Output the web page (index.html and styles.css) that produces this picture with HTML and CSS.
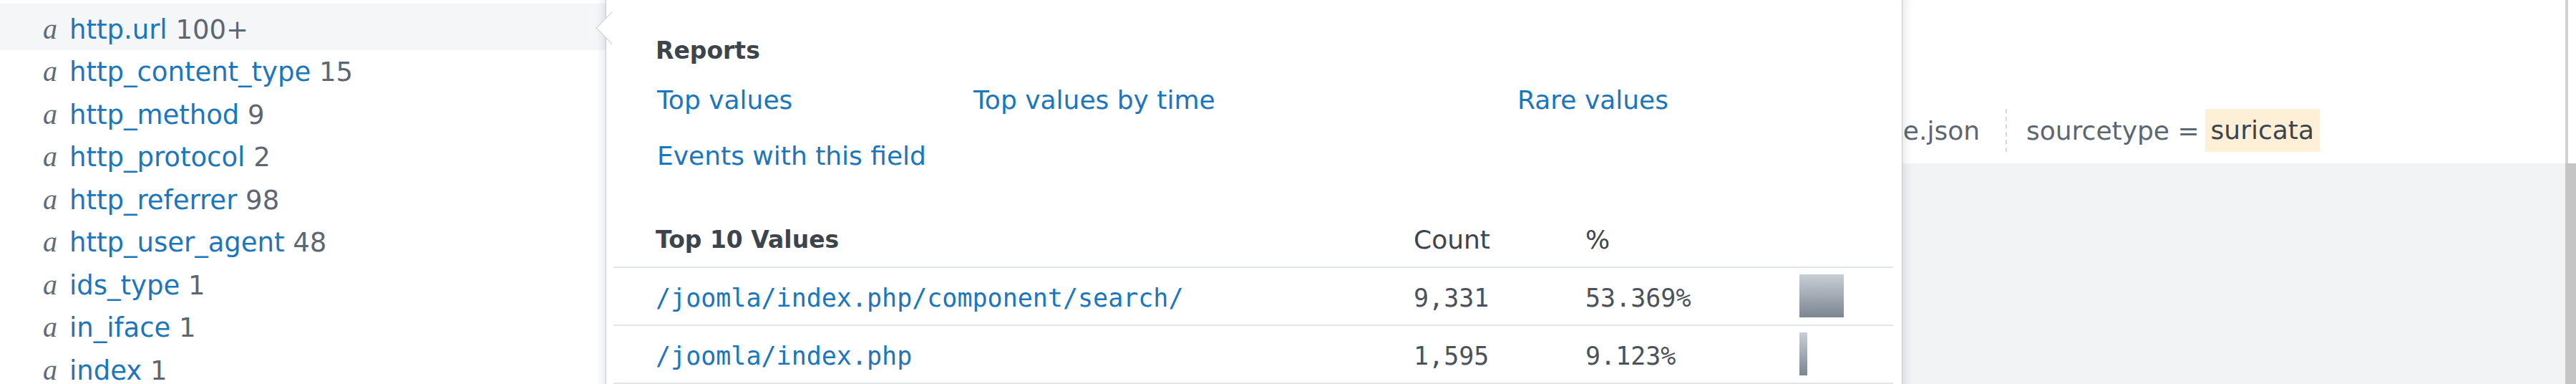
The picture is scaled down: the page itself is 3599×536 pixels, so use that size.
FILE: index.html
```html
<!DOCTYPE html>
<html lang="en">
<head>
<meta charset="utf-8">
<title>Fields</title>
<link rel="stylesheet" href="styles.css">
</head>
<body>
<div class="app">
  <aside class="fields">
    <ul class="field-list">
      <li class="field active"><span class="type">a</span><span class="name">http.url</span> <span class="count">100+</span></li>
      <li class="field"><span class="type">a</span><span class="name">http_content_type</span> <span class="count">15</span></li>
      <li class="field"><span class="type">a</span><span class="name">http_method</span> <span class="count">9</span></li>
      <li class="field"><span class="type">a</span><span class="name">http_protocol</span> <span class="count">2</span></li>
      <li class="field"><span class="type">a</span><span class="name">http_referrer</span> <span class="count">98</span></li>
      <li class="field"><span class="type">a</span><span class="name">http_user_agent</span> <span class="count">48</span></li>
      <li class="field"><span class="type">a</span><span class="name">ids_type</span> <span class="count">1</span></li>
      <li class="field"><span class="type">a</span><span class="name">in_iface</span> <span class="count">1</span></li>
      <li class="field"><span class="type">a</span><span class="name">index</span> <span class="count">1</span></li>
    </ul>
  </aside>

  <main class="results">
    <div class="event">
      <div class="meta">
        <div class="meta-lead"><span>host = ubuntu&nbsp;&nbsp;&nbsp;source = /var/log/suricata/eve.json</span></div>
        <span class="sep"></span>
        <span class="meta-key">sourcetype =</span><span class="meta-val">suricata</span>
      </div>
    </div>
    <div class="results-body"></div>
  </main>

  <div class="scrollbar"><div class="track"></div><div class="thumb"></div></div>

  <div class="popover">
    <div class="popover-arrow"></div>
    <section class="reports">
      <h3 class="section-title">Reports</h3>
      <div class="report-links">
        <a class="link">Top values</a>
        <a class="link">Top values by time</a>
        <a class="link">Rare values</a>
        <a class="link">Events with this field</a>
      </div>
    </section>
    <section class="top-values">
      <div class="tv-row tv-head">
        <div class="cell first"><h3 class="section-title">Top 10 Values</h3></div>
        <div class="cell">Count</div>
        <div class="cell">%</div>
        <div class="cell"></div>
      </div>
      <div class="tv-row tv-data">
        <div class="cell first value">/joomla/index.php/component/search/</div>
        <div class="cell num">9,331</div>
        <div class="cell num">53.369%</div>
        <div class="cell bar-cell"><div class="bar-track"><div class="bar" style="width:53.369%"></div></div></div>
      </div>
      <div class="tv-row tv-data">
        <div class="cell first value">/joomla/index.php</div>
        <div class="cell num">1,595</div>
        <div class="cell num">9.123%</div>
        <div class="cell bar-cell"><div class="bar-track"><div class="bar" style="width:9.123%"></div></div></div>
      </div>
    </section>
  </div>
</div>
</body>
</html>
```
FILE: styles.css
```css
html, body {
  margin: 0;
  padding: 0;
}

body {
  width: 3599px;
  height: 536px;
  overflow: hidden;
  background: #ffffff;
  font-family: "DejaVu Sans", "Noto Sans", sans-serif;
  color: #3c444d;
}

.app {
  position: relative;
  display: flex;
  height: 536px;
  overflow: hidden;
}

/* ---------- field sidebar ---------- */
.fields {
  width: 846px;
  flex: none;
  background: #ffffff;
}

.field-list {
  list-style: none;
  margin: 5px 0 0;
  padding: 0;
}

.field {
  box-sizing: border-box;
  height: 59.5px;
  line-height: 59.5px;
  padding-left: 60px;
  font-size: 37px;
  white-space: nowrap;
}

.field.active {
  height: 65px;
  padding-top: 5.5px;
  background: #f5f6f8;
}

.type {
  display: inline-block;
  width: 37px;
  font-family: "Liberation Serif", serif;
  font-style: italic;
  font-size: 40px;
  color: #5f6b78;
}

.name {
  color: #1a76bd;
}

.count {
  color: #5c6773;
}

/* ---------- results ---------- */
.results {
  flex: 1;
  min-width: 0;
  display: flex;
  flex-direction: column;
  background: #f2f3f5;
}

.event {
  box-sizing: border-box;
  height: 228px;
  padding-top: 152px;
  background: #ffffff;
}

.meta {
  display: flex;
  align-items: center;
  height: 60px;
  font-size: 36px;
  color: #5c6773;
  white-space: nowrap;
}

.meta-lead {
  flex: none;
  width: 1920px;
  display: flex;
  justify-content: flex-end;
  overflow: hidden;
}

.sep {
  flex: none;
  width: 0;
  height: 60px;
  border-left: 2px dashed #d3d8de;
  margin: 0 27px 0 36px;
}

.meta-key {
  margin-right: 8px;
}

.meta-val {
  line-height: 60px;
  padding: 0 8px;
  background: #fdf0d6;
  color: #3c444d;
}

.results-body {
  flex: 1;
}

.scrollbar {
  width: 15px;
  flex: none;
  display: flex;
  flex-direction: column;
}

.track {
  height: 228px;
  background: #ffffff;
  border-left: 4px solid #d2d2d2;
}

.thumb {
  flex: 1;
  background: #c5c5c5;
}

/* ---------- popover ---------- */
.popover {
  position: absolute;
  left: 846px;
  top: -10px;
  box-sizing: border-box;
  width: 1812px;
  height: 560px;
  padding: 60px 12px 0 10px;
  background: #ffffff;
  border: 1px solid #c5ccd5;
  box-shadow: 0 0 14px rgba(40, 50, 65, 0.2);
}

.popover-arrow {
  position: absolute;
  left: -8px;
  top: 31.5px;
  box-sizing: border-box;
  width: 32px;
  height: 32px;
  background: #ffffff;
  border-left: 1px solid #c5ccd5;
  border-bottom: 1px solid #c5ccd5;
  transform: rotate(45deg);
}

.reports {
  padding-left: 59px;
}

.section-title {
  margin: 0;
  font-size: 33px;
  line-height: 40px;
  font-weight: bold;
  color: #3c444d;
}

.report-links {
  display: grid;
  grid-template-columns: 442px 760px 1fr;
  row-gap: 34px;
  margin: 26.5px 0 0 2px;
  font-size: 36px;
  line-height: 44px;
}

.link {
  color: #1a76bd;
  white-space: nowrap;
}

.top-values {
  margin-top: 75.5px;
}

.tv-row {
  display: grid;
  grid-template-columns: 1118px 240px 299px 1fr;
  align-items: start;
  border-bottom: 2px solid #e2e6eb;
}

.tv-head {
  height: 59px;
  box-sizing: border-box;
  padding-bottom: 17px;
  font-size: 36px;
  line-height: 40px;
  color: #3c444d;
}

.cell.first {
  padding-left: 59px;
}

.tv-data {
  box-sizing: border-box;
  height: 81px;
  padding-top: 6px;
  font-family: "DejaVu Sans Mono", "Liberation Mono", monospace;
  font-size: 35px;
  line-height: 73px;
  white-space: nowrap;
}

.value {
  color: #1a76bd;
}

.num {
  color: #4a525b;
}

.bar-cell {
  margin-top: 3px;
}

.bar-track {
  width: 116px;
  height: 60px;
}

.bar {
  height: 60px;
  background: linear-gradient(#c8ced5, #7c8691);
}
```
